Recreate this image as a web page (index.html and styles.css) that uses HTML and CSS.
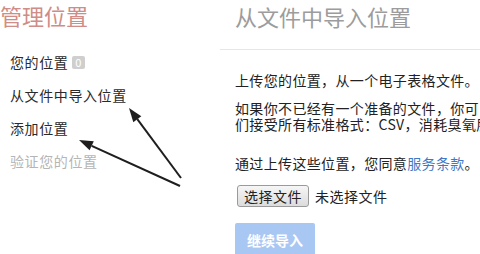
FILE: index.html
```html
<!DOCTYPE html>
<html lang="zh-CN">
<head>
    <meta charset="UTF-8">
    <title>从文件中导入位置</title>
    <link rel="stylesheet" href="styles.css">
</head>
<body>
    <div class="page">
        <div class="sidebar">
            <h1>管理位置</h1>
            <ul class="nav">
                <li>您的位置 <span class="badge">0</span></li>
                <li>从文件中导入位置</li>
                <li>添加位置</li>
                <li class="muted">验证您的位置</li>
            </ul>
        </div>
        <div class="main">
            <h2>从文件中导入位置</h2>
            <p class="first">上传您的位置，从一个电子表格文件。</p>
            <p class="second">如果你不已经有一个准备的文件，你可以下载模板。我<br>们接受所有标准格式：CSV，消耗臭氧层物质</p>
            <p class="third">通过上传这些位置，您同意<a href="#">服务条款</a>。</p>
            <div class="file-row">
                <button class="choose">选择文件</button>
                <span>未选择文件</span>
            </div>
            <button class="next">继续导入</button>
        </div>
    </div>

    <svg class="arrows" width="480" height="254" viewBox="0 0 480 254">
        <line x1="181" y1="178" x2="137.3" y2="119.2" stroke="#1e1e1e" stroke-width="2"/>
        <polygon points="129,108 141.3,116.2 133.3,122.2" fill="#1e1e1e"/>
        <line x1="180" y1="186" x2="91.7" y2="145.8" stroke="#1e1e1e" stroke-width="2"/>
        <polygon points="79,140 93.8,141.3 89.6,150.3" fill="#1e1e1e"/>
    </svg>
</body>
</html>
```

FILE: styles.css
```css
body {
    margin: 0;
    font-family: "Noto Sans CJK SC", "Liberation Sans", sans-serif;
    background-color: #fff;
    color: #222;
    width: 480px;
    height: 254px;
    overflow: hidden;
}

.page {
    display: flex;
}

.sidebar {
    width: 220px;
    flex-shrink: 0;
}

.sidebar h1 {
    margin: 0;
    font-size: 22px;
    font-weight: normal;
    line-height: 30px;
    color: #d08c86;
}

.nav {
    list-style: none;
    margin: 16px 0 0;
    padding: 0 0 0 10px;
}

.nav li {
    font-size: 14px;
    line-height: 33px;
    letter-spacing: 0.6px;
    color: #2a2a2a;
}

.nav .muted {
    color: #b5b5b5;
}

.badge {
    display: inline-block;
    background-color: #cfcfcf;
    color: #fff;
    font-size: 11px;
    line-height: 13px;
    padding: 0 3px;
    border-radius: 2px;
    vertical-align: 1px;
}

.main {
    flex: 1;
    min-width: 0;
    overflow: hidden;
}

.main h2 {
    margin: 0;
    padding: 0 0 17px 15px;
    font-size: 22px;
    font-weight: normal;
    line-height: 32px;
    color: #9c9c9c;
    border-bottom: 1px solid #e6e6e6;
}

.main p {
    margin: 0;
    padding-left: 15px;
    font-size: 14px;
    line-height: 16px;
    letter-spacing: 0.35px;
    white-space: nowrap;
}

.main .first {
    margin-top: 22px;
}

.main .second {
    margin-top: 12px;
}

.main .third {
    margin-top: 23px;
}

.main a {
    color: #3f78c4;
    text-decoration: none;
}

.file-row {
    margin-top: 14px;
    padding-left: 17px;
    display: flex;
    align-items: center;
    gap: 6px;
    font-size: 14px;
    letter-spacing: 0.5px;
}

.choose {
    font-family: inherit;
    font-size: 14px;
    letter-spacing: 0.5px;
    height: 22px;
    padding: 0 6px;
    line-height: 18px;
    color: #222;
    background: linear-gradient(#f6f6f6, #dcdcdc);
    border: 1px solid #9a9a9a;
    border-radius: 3px;
}

.next {
    margin: 16px 0 0 15px;
    width: 80px;
    height: 34px;
    font-family: inherit;
    font-size: 14px;
    font-weight: bold;
    color: #fff;
    background-color: #a9c7f3;
    border: none;
    border-radius: 2px;
}

.arrows {
    position: absolute;
    left: 0;
    top: 0;
    pointer-events: none;
}
```
